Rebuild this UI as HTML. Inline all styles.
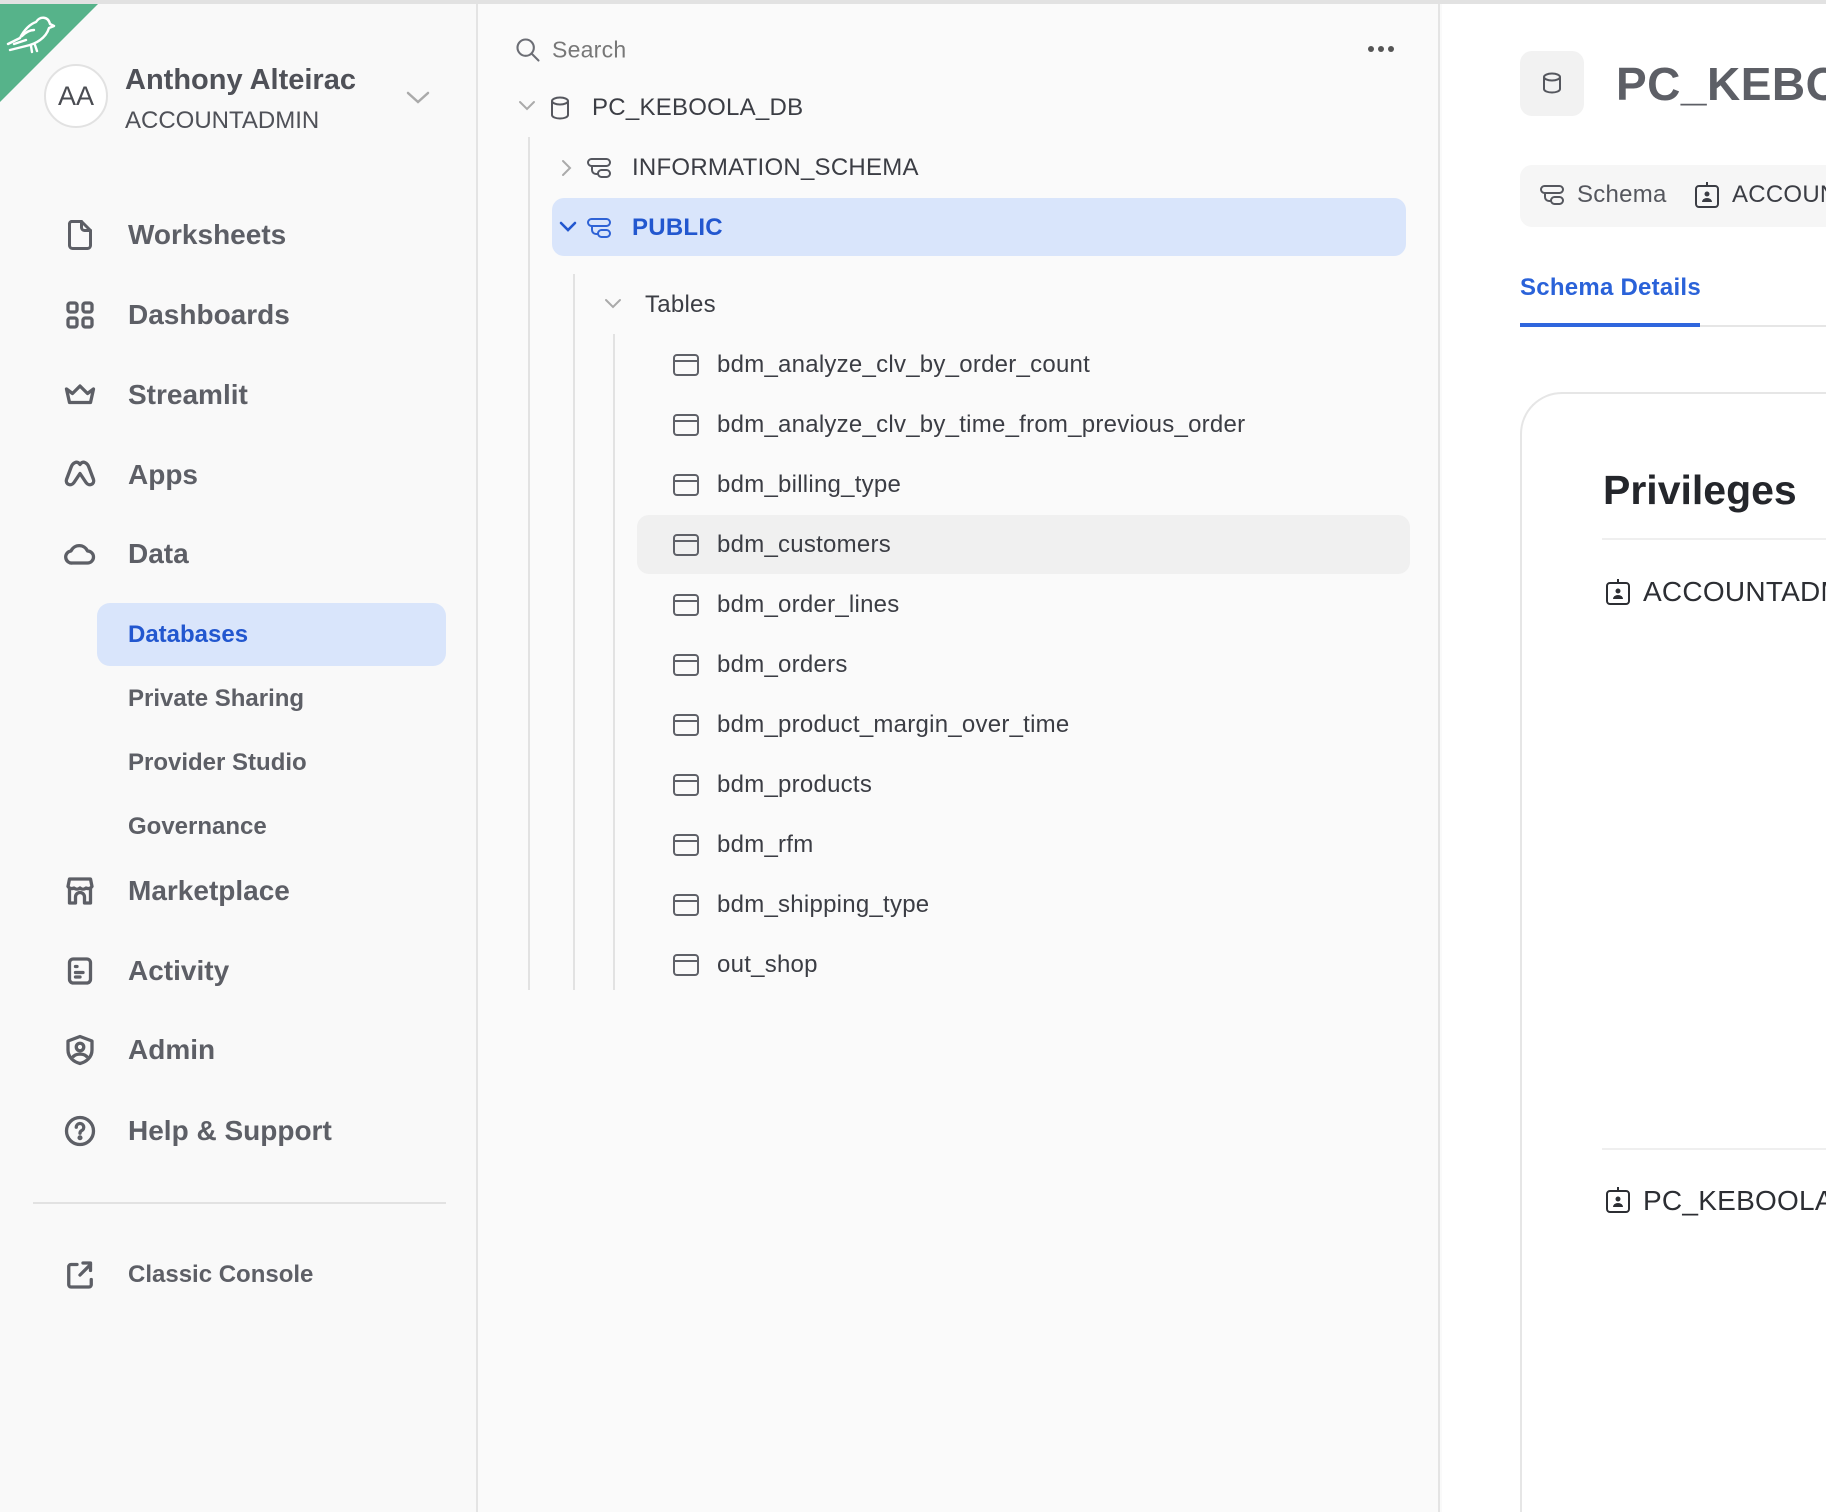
<!DOCTYPE html>
<html><head><meta charset="utf-8">
<style>
*{margin:0;padding:0;box-sizing:border-box}
html,body{width:1826px;height:1512px;overflow:hidden;background:#fafafa;font-family:"Liberation Sans",sans-serif}
#w{position:relative;width:1826px;height:1512px;overflow:hidden}
.a{position:absolute;white-space:nowrap}
.nav{position:absolute;left:128px;font-size:28px;font-weight:bold;color:#5d5f66;transform:translateY(-50%)}
.sub{position:absolute;left:128px;font-size:24px;font-weight:bold;color:#5d5f66;transform:translateY(-50%)}
.ic{position:absolute;left:62px;width:36px;height:36px;transform:translateY(-50%)}
.tr{position:absolute;font-size:24px;color:#3b3d44;transform:translateY(-50%);letter-spacing:0.25px}
.ti{position:absolute;left:672px;width:28px;height:24px;transform:translateY(-50%)}
</style></head><body><div id="w">
<div class="a" style="left:0;top:0;width:1826px;height:4px;background:#e2e2e2"></div>
<div class="a" style="left:0;top:4px;width:478px;height:1508px;background:#f9f9f9;border-right:2px solid #e4e4e4"></div>
<svg class="a" style="left:0;top:4px" width="100" height="100"><polygon points="0,0 98,0 0,98" fill="#56b38a"/>
<g fill="none" stroke="#fff" stroke-width="2.4" stroke-linecap="round" stroke-linejoin="round"><path d="M8 40 L20 34 C24 26 30 20 36 18 C40 12 48 12 50 20 L54 22 L49 24 C46 34 36 40 26 42 L10 46 M14 40 L26 36 M31 42 L32 48 M35 41 L37 47"/><path d="M22 32 C26 28 30 26 34 26"/></g></svg>
<div class="a" style="left:44px;top:64px;width:64px;height:64px;border-radius:50%;background:#fff;border:2px solid #e2e2e2;font-size:27px;color:#4a4c52;text-align:center;line-height:60px">AA</div>
<div class="a" style="left:125px;top:64px;font-size:29px;font-weight:bold;color:#4f5158">Anthony Alteirac</div>
<div class="a" style="left:125px;top:107px;font-size:24px;color:#4f5158">ACCOUNTADMIN</div>
<svg class="a" style="left:406px;top:90px" width="24" height="16"><path d="M2 3 L12 12 L22 3" fill="none" stroke="#aaa" stroke-width="2.5" stroke-linecap="round"/></svg>

<svg class="ic" style="top:235px" viewBox="0 0 24 24" fill="none" stroke="#5d5f66" stroke-width="2" stroke-linejoin="round" stroke-linecap="round"><path d="M6 3h7l6 6v10a2 2 0 0 1-2 2H7a2 2 0 0 1-2-2V5a2 2 0 0 1 1-2z"/><path d="M13 3v4a2 2 0 0 0 2 2h4"/></svg>
<div class="nav" style="top:235px">Worksheets</div>
<svg class="ic" style="top:315px" viewBox="0 0 24 24" fill="none" stroke="#5d5f66" stroke-width="2.2"><rect x="4" y="4" width="6" height="6" rx="1.5"/><rect x="14" y="4" width="6" height="6" rx="1.5"/><rect x="4" y="14" width="6" height="6" rx="1.5"/><rect x="14" y="14" width="6" height="6" rx="1.5"/></svg>
<div class="nav" style="top:315px">Dashboards</div>
<svg class="ic" style="top:395px" viewBox="0 0 24 24" fill="none" stroke="#5d5f66" stroke-width="2.2" stroke-linejoin="round"><path d="M3 8l4 3 5-5 5 5 4-3-2 9H5z"/></svg>
<div class="nav" style="top:395px">Streamlit</div>
<svg class="ic" style="top:475px" viewBox="0 0 24 24" fill="none" stroke="#5d5f66" stroke-width="2.2" stroke-linejoin="round"><path d="M12 5c-2-3-5-1-6 2l-3 8c-1 3 3 5 5 2l4-6 4 6c2 3 6 1 5-2l-3-8c-1-3-4-5-6-2z"/></svg>
<div class="nav" style="top:475px">Apps</div>
<svg class="ic" style="top:554px" viewBox="0 0 24 24" fill="none" stroke="#5d5f66" stroke-width="2.2" stroke-linejoin="round"><path d="M7 18a4 4 0 0 1-1-8 6 6 0 0 1 11 0 4 4 0 0 1 0 8z"/></svg>
<div class="nav" style="top:554px">Data</div>
<div class="a" style="left:97px;top:603px;width:349px;height:63px;border-radius:13px;background:#d9e5fb"></div>
<div class="sub" style="top:635px;color:#2257cf">Databases</div>
<div class="sub" style="top:699px">Private Sharing</div>
<div class="sub" style="top:763px">Provider Studio</div>
<div class="sub" style="top:827px">Governance</div>
<svg class="ic" style="top:891px" viewBox="0 0 24 24" fill="none" stroke="#5d5f66" stroke-width="2.2" stroke-linejoin="round"><path d="M5 4h14l1 5a3 3 0 0 1-4 1 3 3 0 0 1-4 0 3 3 0 0 1-4 0 3 3 0 0 1-4-1z"/><path d="M5 10v10h4v-4a3 3 0 0 1 6 0v4h4V10"/></svg>
<div class="nav" style="top:891px">Marketplace</div>
<svg class="ic" style="top:971px" viewBox="0 0 24 24" fill="none" stroke="#5d5f66" stroke-width="2.2" stroke-linecap="round"><rect x="5" y="4" width="14" height="16" rx="2.5"/><path d="M9 9h1M9 13h5M9 16h3"/></svg>
<div class="nav" style="top:971px">Activity</div>
<svg class="ic" style="top:1050px" viewBox="0 0 24 24" fill="none" stroke="#5d5f66" stroke-width="2.2" stroke-linejoin="round"><path d="M12 3l8 3v6c0 5-4 8-8 9-4-1-8-4-8-9V6z"/><circle cx="12" cy="10" r="2.5"/><path d="M7 17c2-3 8-3 10 0"/></svg>
<div class="nav" style="top:1050px">Admin</div>
<svg class="ic" style="top:1131px" viewBox="0 0 24 24" fill="none" stroke="#5d5f66" stroke-width="2.2" stroke-linecap="round"><circle cx="12" cy="12" r="9"/><path d="M9.5 9.5a2.5 2.5 0 1 1 3.5 2.3c-.7.4-1 1-1 1.7"/><circle cx="12" cy="16.5" r=".6" fill="#5d5f66"/></svg>
<div class="nav" style="top:1131px">Help &amp; Support</div>
<div class="a" style="left:33px;top:1202px;width:413px;height:2px;background:#e2e2e2"></div>
<svg class="ic" style="top:1275px" viewBox="0 0 24 24" fill="none" stroke="#5d5f66" stroke-width="2.2" stroke-linecap="round" stroke-linejoin="round"><path d="M10 5H6a1.5 1.5 0 0 0-1.5 1.5v12A1.5 1.5 0 0 0 6 20h12a1.5 1.5 0 0 0 1.5-1.5V15"/><path d="M12 12l7-7M14 4h5v5"/></svg>
<div class="sub" style="top:1275px">Classic Console</div>

<div class="a" style="left:480px;top:4px;width:960px;height:1508px;background:#fafafa;border-right:2px solid #e4e4e4"></div>
<svg class="a" style="left:514px;top:36px" width="28" height="28" viewBox="0 0 24 24" fill="none" stroke="#6c6e75" stroke-width="1.8" stroke-linecap="round"><circle cx="10" cy="10" r="7"/><path d="M15 15l6 6"/></svg>
<div class="tr" style="left:552px;top:50px;font-size:23px;color:#777">Search</div>
<svg class="a" style="left:1366px;top:44px" width="30" height="10"><circle cx="5" cy="5" r="3" fill="#555"/><circle cx="15" cy="5" r="3" fill="#555"/><circle cx="25" cy="5" r="3" fill="#555"/></svg>

<svg class="a" style="left:517px;top:99px" width="20" height="14"><path d="M3 3l7 7 7-7" fill="none" stroke="#aaa" stroke-width="2" stroke-linecap="round"/></svg>
<svg class="a" style="left:548px;top:95px" width="24" height="26" viewBox="0 0 24 26" fill="none" stroke="#55575e" stroke-width="2"><ellipse cx="12" cy="6" rx="8" ry="3.5"/><path d="M4 6v14c0 2 3.6 3.5 8 3.5s8-1.5 8-3.5V6"/></svg>
<div class="tr" style="left:592px;top:108px">PC_KEBOOLA_DB</div>
<div class="a" style="left:528px;top:137px;width:2px;height:853px;background:#e2e2e2"></div>

<svg class="a" style="left:560px;top:158px" width="14" height="20"><path d="M3 3l7 7-7 7" fill="none" stroke="#aaa" stroke-width="2" stroke-linecap="round"/></svg>
<svg class="a" style="left:586px;top:156px" width="28" height="24" viewBox="0 0 28 24" fill="none" stroke="#55575e" stroke-width="2"><rect x="2" y="3" width="22" height="7" rx="3.5"/><rect x="12" y="14" width="12" height="7" rx="3.5"/><path d="M6 10v4a4 4 0 0 0 4 4h2"/></svg>
<div class="tr" style="left:632px;top:168px">INFORMATION_SCHEMA</div>

<div class="a" style="left:552px;top:198px;width:854px;height:58px;border-radius:12px;background:#d9e5fb"></div>
<svg class="a" style="left:558px;top:220px" width="20" height="14"><path d="M3 3l7 7 7-7" fill="none" stroke="#2257cf" stroke-width="2.6" stroke-linecap="round"/></svg>
<svg class="a" style="left:586px;top:216px" width="28" height="24" viewBox="0 0 28 24" fill="none" stroke="#2f63d6" stroke-width="2"><rect x="2" y="3" width="22" height="7" rx="3.5"/><rect x="12" y="14" width="12" height="7" rx="3.5"/><path d="M6 10v4a4 4 0 0 0 4 4h2"/></svg>
<div class="tr" style="left:632px;top:228px;font-weight:bold;color:#2257cf">PUBLIC</div>

<div class="a" style="left:573px;top:274px;width:2px;height:716px;background:#e2e2e2"></div>
<svg class="a" style="left:603px;top:297px" width="20" height="14"><path d="M3 3l7 7 7-7" fill="none" stroke="#aaa" stroke-width="2" stroke-linecap="round"/></svg>
<div class="tr" style="left:645px;top:305px">Tables</div>
<div class="a" style="left:613px;top:334px;width:2px;height:656px;background:#e2e2e2"></div>

<div class="a" style="left:637px;top:515px;width:773px;height:59px;border-radius:12px;background:#f0f0f0"></div>

<svg width="0" height="0" style="position:absolute"><defs><g id="tb"><rect x="2" y="2" width="24" height="20" rx="3" fill="none" stroke="#5f6168" stroke-width="2"/><path d="M2 8h24" stroke="#5f6168" stroke-width="2"/></g></defs></svg>
<svg class="ti" style="top:365px"><use href="#tb"/></svg><div class="tr" style="left:717px;top:365px">bdm_analyze_clv_by_order_count</div>
<svg class="ti" style="top:425px"><use href="#tb"/></svg><div class="tr" style="left:717px;top:425px">bdm_analyze_clv_by_time_from_previous_order</div>
<svg class="ti" style="top:485px"><use href="#tb"/></svg><div class="tr" style="left:717px;top:485px">bdm_billing_type</div>
<svg class="ti" style="top:545px"><use href="#tb"/></svg><div class="tr" style="left:717px;top:545px">bdm_customers</div>
<svg class="ti" style="top:605px"><use href="#tb"/></svg><div class="tr" style="left:717px;top:605px">bdm_order_lines</div>
<svg class="ti" style="top:665px"><use href="#tb"/></svg><div class="tr" style="left:717px;top:665px">bdm_orders</div>
<svg class="ti" style="top:725px"><use href="#tb"/></svg><div class="tr" style="left:717px;top:725px">bdm_product_margin_over_time</div>
<svg class="ti" style="top:785px"><use href="#tb"/></svg><div class="tr" style="left:717px;top:785px">bdm_products</div>
<svg class="ti" style="top:845px"><use href="#tb"/></svg><div class="tr" style="left:717px;top:845px">bdm_rfm</div>
<svg class="ti" style="top:905px"><use href="#tb"/></svg><div class="tr" style="left:717px;top:905px">bdm_shipping_type</div>
<svg class="ti" style="top:965px"><use href="#tb"/></svg><div class="tr" style="left:717px;top:965px">out_shop</div>

<div class="a" style="left:1442px;top:4px;width:384px;height:1508px;background:#fff"></div>
<div class="a" style="left:1520px;top:51px;width:64px;height:65px;border-radius:12px;background:#f2f2f2"></div>
<svg class="a" style="left:1540px;top:71px" width="24" height="26" viewBox="0 0 24 26" fill="none" stroke="#55575e" stroke-width="2"><ellipse cx="12" cy="6" rx="8" ry="3.5"/><path d="M4 6v12c0 2 3.6 3.5 8 3.5s8-1.5 8-3.5V6"/></svg>
<div class="a" style="left:1616px;top:59px;font-size:46px;font-weight:bold;color:#5d5f66;line-height:50px;letter-spacing:0.5px">PC_KEBOOLA_DB</div>
<div class="a" style="left:1520px;top:165px;width:306px;height:62px;border-radius:12px 0 0 12px;background:#f6f6f6"></div>
<svg class="a" style="left:1539px;top:183px" width="28" height="24" viewBox="0 0 28 24" fill="none" stroke="#55575e" stroke-width="2"><rect x="2" y="3" width="22" height="7" rx="3.5"/><rect x="12" y="14" width="12" height="7" rx="3.5"/><path d="M6 10v4a4 4 0 0 0 4 4h2"/></svg>
<div class="tr" style="left:1577px;top:195px;color:#55575e">Schema</div>
<svg class="a" style="left:1694px;top:181px" width="26" height="28" viewBox="0 0 26 28" fill="none" stroke="#3b3d44" stroke-width="2"><rect x="2" y="5" width="22" height="21" rx="3"/><path d="M13 1v4"/><circle cx="13" cy="13" r="2.5" fill="#3b3d44" stroke="none"/><path d="M8 21a5 4 0 0 1 10 0z" fill="#3b3d44" stroke="none"/></svg>
<div class="tr" style="left:1732px;top:195px;color:#3b3d44">ACCOUNTADMIN</div>
<div class="tr" style="left:1520px;top:288px;font-size:24px;font-weight:bold;color:#2a62d9">Schema Details</div>
<div class="a" style="left:1520px;top:325px;width:306px;height:2px;background:#e6e6e6"></div>
<div class="a" style="left:1520px;top:323px;width:180px;height:4px;background:#2f66dd"></div>
<div class="a" style="left:1520px;top:392px;width:306px;height:1120px;border:2px solid #e6e6e6;border-right:none;border-bottom:none;border-radius:42px 0 0 0;background:#fff"></div>
<div class="a" style="left:1603px;top:466px;font-size:41px;font-weight:bold;color:#24262b;line-height:48px">Privileges</div>
<div class="a" style="left:1602px;top:538px;width:224px;height:2px;background:#efefef"></div>
<svg class="a" style="left:1605px;top:578px" width="26" height="28" viewBox="0 0 26 28" fill="none" stroke="#2c2e33" stroke-width="2"><rect x="2" y="5" width="22" height="21" rx="3"/><path d="M13 1v4"/><circle cx="13" cy="13" r="2.5" fill="#2c2e33" stroke="none"/><path d="M8 21a5 4 0 0 1 10 0z" fill="#2c2e33" stroke="none"/></svg>
<div class="tr" style="left:1643px;top:592px;font-size:28px;color:#2c2e33">ACCOUNTADMIN</div>
<div class="a" style="left:1602px;top:1148px;width:224px;height:2px;background:#efefef"></div>
<svg class="a" style="left:1605px;top:1186px" width="26" height="28" viewBox="0 0 26 28" fill="none" stroke="#2c2e33" stroke-width="2"><rect x="2" y="5" width="22" height="21" rx="3"/><path d="M13 1v4"/><circle cx="13" cy="13" r="2.5" fill="#2c2e33" stroke="none"/><path d="M8 21a5 4 0 0 1 10 0z" fill="#2c2e33" stroke="none"/></svg>
<div class="tr" style="left:1643px;top:1201px;font-size:28px;color:#2c2e33">PC_KEBOOLA_DB</div>
</div></body></html>
